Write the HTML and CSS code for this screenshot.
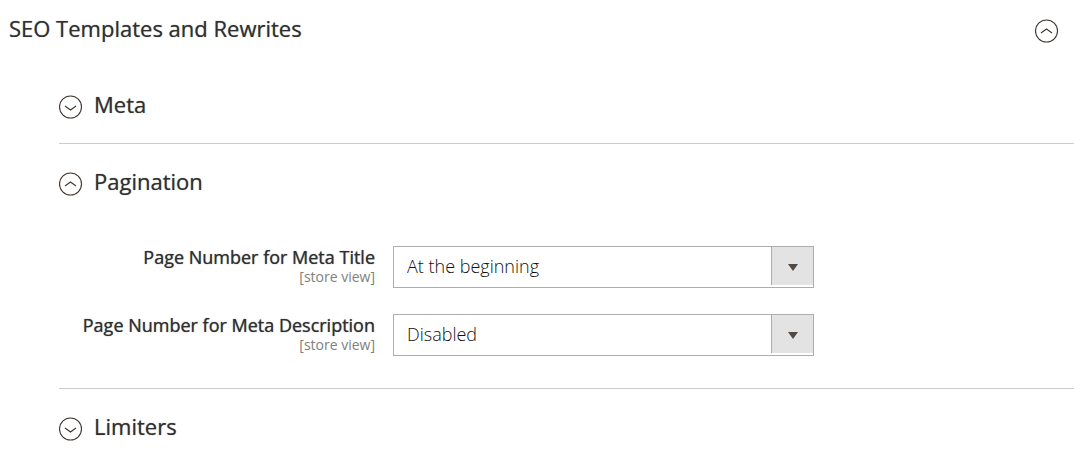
FILE: index.html
```
<!DOCTYPE html>
<html lang="en">
<head>
<meta charset="UTF-8">
<meta name="viewport" content="width=device-width, initial-scale=1.0">
<title>SEO Templates and Rewrites</title>
<link rel="stylesheet" href="styles.css">
</head>
<body>

<section class="config">
    <button type="button" class="head head-main" aria-expanded="true">
        <span class="head-title">SEO Templates and Rewrites</span>
        <svg class="icon" viewBox="0 0 24 24"><circle cx="11.5" cy="12" r="11"/><path d="M6 14l5.5-4 5.5 4"/></svg>
    </button>

    <div class="groups">
        <section class="group">
            <button type="button" class="head" aria-expanded="false">
                <svg class="icon" viewBox="0 0 24 24"><circle cx="11.5" cy="12" r="11"/><path d="M6 11l5.5 4 5.5-4"/></svg>
                <span class="head-title">Meta</span>
            </button>
        </section>

        <section class="group">
            <button type="button" class="head" aria-expanded="true">
                <svg class="icon" viewBox="0 0 24 24"><circle cx="11.5" cy="12" r="11"/><path d="M6 14l5.5-4 5.5 4"/></svg>
                <span class="head-title">Pagination</span>
            </button>
            <div class="fields">
                <div class="field">
                    <label class="label" for="meta-title">Page Number for Meta Title <span class="scope">[store view]</span></label>
                    <div class="control">
                        <select class="select" id="meta-title">
                            <option>At the beginning</option>
                            <option>At the end</option>
                            <option>Disabled</option>
                        </select>
                    </div>
                </div>
                <div class="field">
                    <label class="label" for="meta-description">Page Number for Meta Description <span class="scope">[store view]</span></label>
                    <div class="control">
                        <select class="select" id="meta-description">
                            <option>Disabled</option>
                            <option>At the beginning</option>
                            <option>At the end</option>
                        </select>
                    </div>
                </div>
            </div>
        </section>

        <section class="group">
            <button type="button" class="head" aria-expanded="false">
                <svg class="icon" viewBox="0 0 24 24"><circle cx="11.5" cy="12" r="11"/><path d="M6 11l5.5 4 5.5-4"/></svg>
                <span class="head-title">Limiters</span>
            </button>
        </section>
    </div>
</section>

</body>
</html>
```
FILE: styles.css
```
* {
    box-sizing: border-box;
}
body {
    margin: 0;
    background-color: #ffffff;
    color: #303030;
    font-family: "Open Sans", sans-serif;
}
.config {
    padding: 19px 3px 0 9px;
}
.head {
    display: flex;
    align-items: flex-start;
    gap: 11px;
    width: 100%;
    padding: 28px 0 24px;
    border: none;
    background: none;
    color: inherit;
    font-family: inherit;
    font-size: 22px;
    line-height: 18px;
    text-align: left;
    text-shadow: 0 0 1px rgba(48, 48, 48, 0.6);
    cursor: pointer;
}
.head-main {
    justify-content: space-between;
    padding: 0 15px 0 0;
}
.icon {
    flex: none;
    width: 24px;
    height: 24px;
    fill: none;
    stroke: #41362f;
    stroke-width: 1.1;
}
.groups {
    margin: 24px 0 0 50px;
}
.group {
    border-bottom: 1px solid #cccccc;
}
.group:last-child {
    border-bottom: none;
}
.fields {
    padding: 26px 0 32px;
}
.field {
    display: grid;
    grid-template-columns: 316px minmax(0, 421px);
    column-gap: 18px;
    margin-bottom: 26px;
}
.field:last-child {
    margin-bottom: 0;
}
.label {
    font-size: 18px;
    line-height: 22px;
    text-align: right;
    text-shadow: 0 0 1px rgba(48, 48, 48, 0.8);
}
.scope {
    display: block;
    color: #808080;
    font-size: 14px;
    line-height: 18px;
    text-shadow: none;
}
.control {
    position: relative;
}
/* arrow cell over the right end of the select */
.control::before {
    content: "";
    position: absolute;
    top: 1px;
    right: 1px;
    bottom: 3px;
    width: 41px;
    border-left: 1px solid #adadad;
    background-color: #e3e3e3;
    pointer-events: none;
}
.control::after {
    content: "";
    position: absolute;
    top: 18px;
    right: 16px;
    border: 5px solid transparent;
    border-top: 7px solid #514943;
    border-bottom: none;
    pointer-events: none;
}
.select {
    display: block;
    width: 100%;
    height: 42px;
    padding: 0 52px 2px 13px;
    border: 1px solid #adadad;
    border-radius: 0;
    background-color: #ffffff;
    color: #111111;
    font-family: inherit;
    font-size: 18px;
    font-weight: 300;
    appearance: none;
}
```
